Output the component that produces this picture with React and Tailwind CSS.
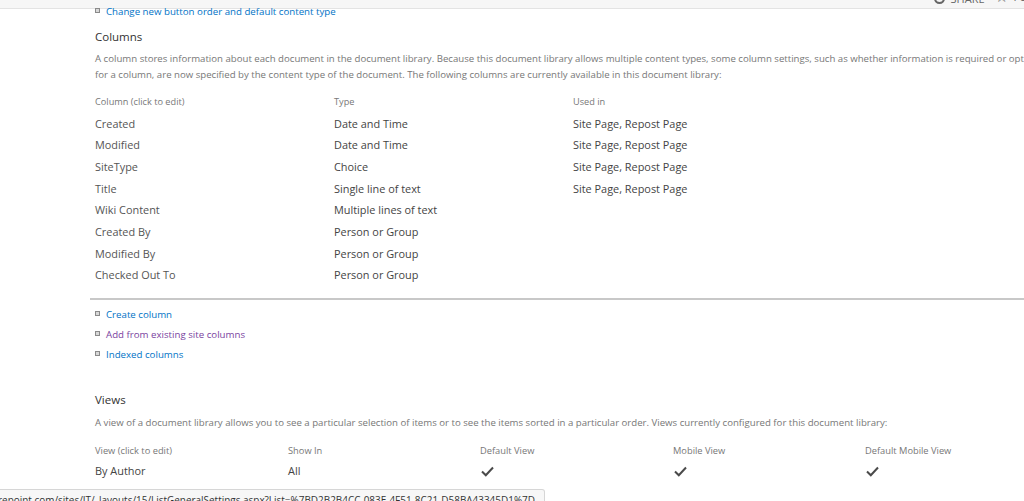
import React from "react";

const columns = [
  { name: "Created", type: "Date and Time", usedIn: "Site Page, Repost Page" },
  { name: "Modified", type: "Date and Time", usedIn: "Site Page, Repost Page" },
  { name: "SiteType", type: "Choice", usedIn: "Site Page, Repost Page" },
  { name: "Title", type: "Single line of text", usedIn: "Site Page, Repost Page" },
  { name: "Wiki Content", type: "Multiple lines of text", usedIn: "" },
  { name: "Created By", type: "Person or Group", usedIn: "" },
  { name: "Modified By", type: "Person or Group", usedIn: "" },
  { name: "Checked Out To", type: "Person or Group", usedIn: "" },
];

function Bullet() {
  return <span className="inline-block w-[5px] h-[5px] border border-[#8a8a8a] bg-[#d8d8d8] mr-[6px] relative top-[-2px]" />;
}

function Check() {
  return (
    <svg className="w-[13px] h-[11px]" viewBox="0 0 13 11" fill="none">
      <path d="M1 5.5 L4.8 9.3 L12 1.5" stroke="#4a4a4a" strokeWidth="2" />
    </svg>
  );
}

function LinkItem({ children, visited = false }) {
  return (
    <div className="h-[20px] flex items-center pl-[5px]">
      <Bullet />
      <span className={visited ? "text-[#7a3fa0]" : "text-[#0072c6]"}>{children}</span>
    </div>
  );
}

export default function App() {
  return (
    <div
      className="relative w-[1024px] h-[501px] overflow-hidden bg-white text-[#444]"
      style={{ fontFamily: '"Open Sans", "Noto Sans", sans-serif' }}
    >
      {/* top ribbon, mostly scrolled away */}
      <div className="h-[9px] bg-[#f6f6f6] border-b border-[#e3e3e3] overflow-hidden flex justify-end items-end mr-[-34px]">
        <div className="flex items-end gap-[10px] text-[11px] text-[#666] leading-none mb-[4px]">
          <span className="flex items-center gap-[6px]">
            <span className="inline-block w-[11px] h-[11px] rounded-full border-2 border-[#666]" />
            SHARE
          </span>
          <span className="flex items-center gap-[6px]">
            <span className="text-[15px] leading-none">☆</span>
            FOLLOW
          </span>
        </div>
      </div>

      <div className="pl-[90px] pr-0 whitespace-nowrap">
        <div className="h-[8px] flex items-center pl-[5px] text-[9.7px] mt-[-1px]">
          <Bullet />
          <span className="text-[#0072c6]">Change new button order and default content type</span>
        </div>

        <div className="pl-[5px] mt-[11px] text-[11.5px] text-[#333] leading-[20px]">Columns</div>

        <div className="pl-[5px] mt-[4px] text-[9.65px] text-[#777] leading-[16px]">
          <div>
            A column stores information about each document in the document library. Because this document library allows multiple content types, some column settings, such as whether information is required or optional
          </div>
          <div>
            for a column, are now specified by the content type of the document. The following columns are currently available in this document library:
          </div>
        </div>

        <div className="pl-[5px] mt-[9px]">
          <div className="grid grid-cols-[239px_239px_1fr] h-[20px] items-center text-[9.2px] text-[#777]">
            <span>Column (click to edit)</span>
            <span>Type</span>
            <span>Used in</span>
          </div>
          <div className="mt-[1px]">
            {columns.map((c) => (
              <div key={c.name} className="grid grid-cols-[239px_239px_1fr] h-[21.7px] items-center text-[10.9px] text-[#444]">
                <span className="text-[#555]">{c.name}</span>
                <span>{c.type}</span>
                <span>{c.usedIn}</span>
              </div>
            ))}
          </div>
        </div>

        <div className="mt-[11px] border-t-2 border-[#c8c8c8]" />

        <div className="mt-[6px] text-[9.7px]">
          <LinkItem>Create column</LinkItem>
          <LinkItem visited>Add from existing site columns</LinkItem>
          <LinkItem>Indexed columns</LinkItem>
        </div>

        <div className="pl-[5px] mt-[24px] text-[11.5px] text-[#333] leading-[20px]">Views</div>
        <div className="pl-[5px] mt-[5px] text-[9.65px] text-[#777] leading-[16px]">
          A view of a document library allows you to see a particular selection of items or to see the items sorted in a particular order. Views currently configured for this document library:
        </div>

        <div className="pl-[5px] mt-[10px]">
          <div className="grid grid-cols-[193px_192px_193px_192px_1fr] h-[20px] items-center text-[9.3px] text-[#777]">
            <span>View (click to edit)</span>
            <span>Show In</span>
            <span>Default View</span>
            <span>Mobile View</span>
            <span>Default Mobile View</span>
          </div>
          <div className="grid grid-cols-[193px_192px_193px_192px_1fr] h-[21px] items-center text-[10.9px] text-[#444]">
            <span>By Author</span>
            <span>All</span>
            <span className="pl-[1px]"><Check /></span>
            <span className="pl-[1px]"><Check /></span>
            <span className="pl-[1px]"><Check /></span>
          </div>
        </div>
      </div>

      {/* browser status bar */}
      <div className="absolute left-0 top-[489px] h-[20px] w-[545px] bg-[#f7f7f7] border border-l-0 border-[#d6d6d6] rounded-tr-[3px] overflow-hidden">
        <div className="mt-[3px] ml-[-2px] text-[9.95px] text-[#333] whitespace-nowrap leading-[14px]">
          repoint.com/sites/IT/_layouts/15/ListGeneralSettings.aspx?List=%7BD2B2B4CC-083E-4F51-8C21-D58BA43345D1%7D
        </div>
      </div>
    </div>
  );
}
